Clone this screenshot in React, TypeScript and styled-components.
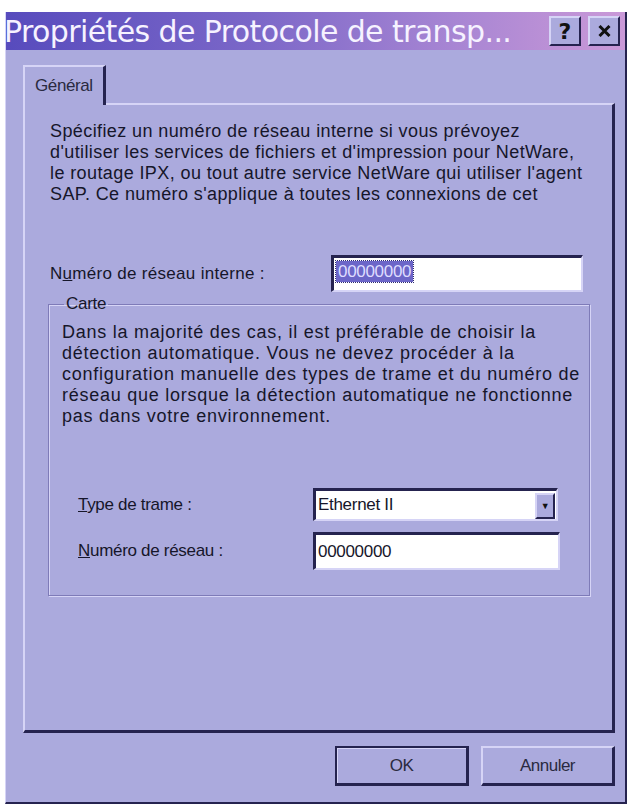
import React from "react";
import styled, { createGlobalStyle } from "styled-components";

const GlobalStyle = createGlobalStyle`
  html, body {
    margin: 0;
    padding: 0;
    background: #ffffff;
  }
  body {
    font-family: "Liberation Sans", Arial, sans-serif;
    color: #16162a;
  }
`;

const face = "#abaadd";
const light = "#d6d4f6";
const dark = "#25234f";
const shade = "#7e7bb8";

const Window = styled.div`
  margin: 12px 0 0 5px;
  width: 622px;
  height: 792px;
  box-sizing: border-box;
  background: ${face};
  border-left: 1px solid ${light};
  border-right: 2px solid ${dark};
  border-bottom: 2px solid ${dark};
  display: flex;
  flex-direction: column;
`;

const TitleBar = styled.div`
  height: 38px;
  flex: none;
  display: flex;
  align-items: center;
  justify-content: space-between;
  background: linear-gradient(90deg, #574bbd 0%, #7b67c8 40%, #a785d3 72%, #ca99d8 100%);
`;

const Title = styled.div`
  font-family: "DejaVu Sans", Verdana, sans-serif;
  font-size: 30px;
  margin-left: -2px;
  color: #f6f2ff;
  white-space: nowrap;
  letter-spacing: -0.6px;
`;

const CaptionButtons = styled.div`
  display: flex;
  gap: 7px;
  margin-right: 5px;
`;

const CaptionButton = styled.div`
  width: 32px;
  height: 30px;
  box-sizing: border-box;
  background: ${face};
  border-top: 2px solid ${light};
  border-left: 2px solid ${light};
  border-right: 2px solid ${dark};
  border-bottom: 2px solid ${dark};
  display: flex;
  align-items: center;
  justify-content: center;
  font-family: "DejaVu Sans", Verdana, sans-serif;
  font-weight: bold;
  font-size: 22px;
  color: #111;
`;

const Body = styled.div`
  flex: 1;
  display: flex;
  flex-direction: column;
  padding: 15px 0 0 17px;
`;

const Tabs = styled.div`
  display: flex;
  position: relative;
  z-index: 1;
  margin-bottom: -2px;
`;

const Tab = styled.div`
  height: 40px;
  box-sizing: border-box;
  padding: 0 10px;
  display: flex;
  align-items: center;
  font-size: 17px;
  letter-spacing: -0.4px;
  color: #2a2a40;
  background: ${face};
  border-top: 2px solid ${light};
  border-left: 2px solid ${light};
  border-right: 3px solid ${dark};
`;

const Panel = styled.div`
  width: 592px;
  height: 630px;
  box-sizing: border-box;
  border-top: 2px solid ${light};
  border-left: 2px solid ${light};
  border-right: 3px solid ${dark};
  border-bottom: 3px solid ${dark};
  padding: 16px 0 0 25px;
  display: flex;
  flex-direction: column;
`;

const Text = styled.p<{ $spacing: number }>`
  margin: 0;
  font-size: 18px;
  line-height: 21px;
  letter-spacing: ${(p) => p.$spacing}px;
  white-space: nowrap;
`;

const FieldRow = styled.div<{ $labelWidth: number; $mt: number; $indent?: number }>`
  display: grid;
  grid-template-columns: ${(p) => p.$labelWidth}px auto;
  align-items: center;
  margin-top: ${(p) => p.$mt}px;
  padding-left: ${(p) => p.$indent ?? 0}px;
`;

const Label = styled.span<{ $spacing?: number }>`
  font-size: 17px;
  letter-spacing: ${(p) => p.$spacing ?? -0.3}px;
  white-space: nowrap;
`;

const Key = styled.span`
  text-decoration: underline;
`;

const TextBox = styled.div<{ $w: number; $h: number }>`
  width: ${(p) => p.$w}px;
  height: ${(p) => p.$h}px;
  box-sizing: border-box;
  background: #ffffff;
  border-top: 3px solid ${dark};
  border-left: 3px solid ${dark};
  border-right: 2px solid ${light};
  border-bottom: 2px solid ${light};
  display: flex;
  align-items: center;
  padding-left: 2px;
  font-size: 17px;
  letter-spacing: -0.3px;
`;

const Selected = styled.span`
  background: #6c66c8;
  color: #dedcff;
  outline: 1px dotted #2c2870;
  padding: 0 2px;
  line-height: 21px;
  margin-top: -6px;
`;

const Combo = styled(TextBox)`
  justify-content: space-between;
  padding-right: 1px;
`;

const DropButton = styled.div`
  width: 20px;
  height: 26px;
  box-sizing: border-box;
  align-self: flex-end;
  background: ${face};
  border-top: 2px solid ${light};
  border-left: 2px solid ${light};
  border-right: 2px solid ${dark};
  border-bottom: 2px solid ${dark};
  display: flex;
  align-items: center;
  justify-content: center;
  font-size: 9px;
  color: #111;
`;

const Group = styled.fieldset`
  margin: 2px 0 0 -2px;
  width: 542px;
  height: 302px;
  box-sizing: border-box;
  padding: 8px 0 0 13px;
  border: 1px solid ${shade};
  box-shadow: 1px 1px 0 ${light}, inset 1px 1px 0 ${light};
  display: flex;
  flex-direction: column;
`;

const Legend = styled.legend`
  font-size: 17px;
  letter-spacing: -0.3px;
  padding: 0 2px;
  margin-left: 2px;
`;

const ButtonRow = styled.div`
  width: 592px;
  display: flex;
  justify-content: flex-end;
  gap: 12px;
  margin-top: 13px;
`;

const PushButton = styled.div<{ $default?: boolean }>`
  width: 134px;
  height: 40px;
  box-sizing: border-box;
  display: flex;
  align-items: center;
  justify-content: center;
  font-size: 17px;
  letter-spacing: -0.5px;
  color: #2a2a40;
  background: ${face};
  border-top: 2px solid ${(p) => (p.$default ? dark : light)};
  border-left: 2px solid ${(p) => (p.$default ? dark : light)};
  border-right: 3px solid ${dark};
  border-bottom: 3px solid ${dark};
  box-shadow: ${(p) => (p.$default ? `inset 1px 1px 0 ${light}` : "none")};
`;

export default function App() {
  return (
    <>
      <GlobalStyle />
      <Window>
        <TitleBar>
          <Title>Propriétés de Protocole de transp...</Title>
          <CaptionButtons>
            <CaptionButton>?</CaptionButton>
            <CaptionButton>
              <svg width="13" height="12" viewBox="0 0 13 12">
                <path d="M1.5 1 L11.5 11 M11.5 1 L1.5 11" stroke="#111" strokeWidth="3" />
              </svg>
            </CaptionButton>
          </CaptionButtons>
        </TitleBar>
        <Body>
          <Tabs>
            <Tab>Général</Tab>
          </Tabs>
          <Panel>
            <Text $spacing={0.4}>
              Spécifiez un numéro de réseau interne si vous prévoyez
              <br />
              d'utiliser les services de fichiers et d'impression pour NetWare,
              <br />
              le routage IPX, ou tout autre service NetWare qui utiliser l'agent
              <br />
              SAP. Ce numéro s'applique à toutes les connexions de cet
            </Text>
            <FieldRow $labelWidth={281} $mt={50}>
              <Label $spacing={0.3}>
                N<Key>u</Key>méro de réseau interne :
              </Label>
              <TextBox $w={252} $h={37}>
                <Selected>00000000</Selected>
              </TextBox>
            </FieldRow>
            <Group>
              <Legend>Carte</Legend>
              <Text $spacing={0.75}>
                Dans la majorité des cas, il est préférable de choisir la
                <br />
                détection automatique. Vous ne devez procéder à la
                <br />
                configuration manuelle des types de trame et du numéro de
                <br />
                réseau que lorsque la détection automatique ne fonctionne
                <br />
                pas dans votre environnement.
              </Text>
              <FieldRow $labelWidth={235} $mt={61} $indent={16}>
                <Label>
                  <Key>T</Key>ype de trame :
                </Label>
                <Combo $w={245} $h={33}>
                  <span>Ethernet II</span>
                  <DropButton>▼</DropButton>
                </Combo>
              </FieldRow>
              <FieldRow $labelWidth={235} $mt={11} $indent={16}>
                <Label>
                  <Key>N</Key>uméro de réseau :
                </Label>
                <TextBox $w={247} $h={38}>
                  00000000
                </TextBox>
              </FieldRow>
            </Group>
          </Panel>
          <ButtonRow>
            <PushButton $default>OK</PushButton>
            <PushButton>Annuler</PushButton>
          </ButtonRow>
        </Body>
      </Window>
    </>
  );
}
